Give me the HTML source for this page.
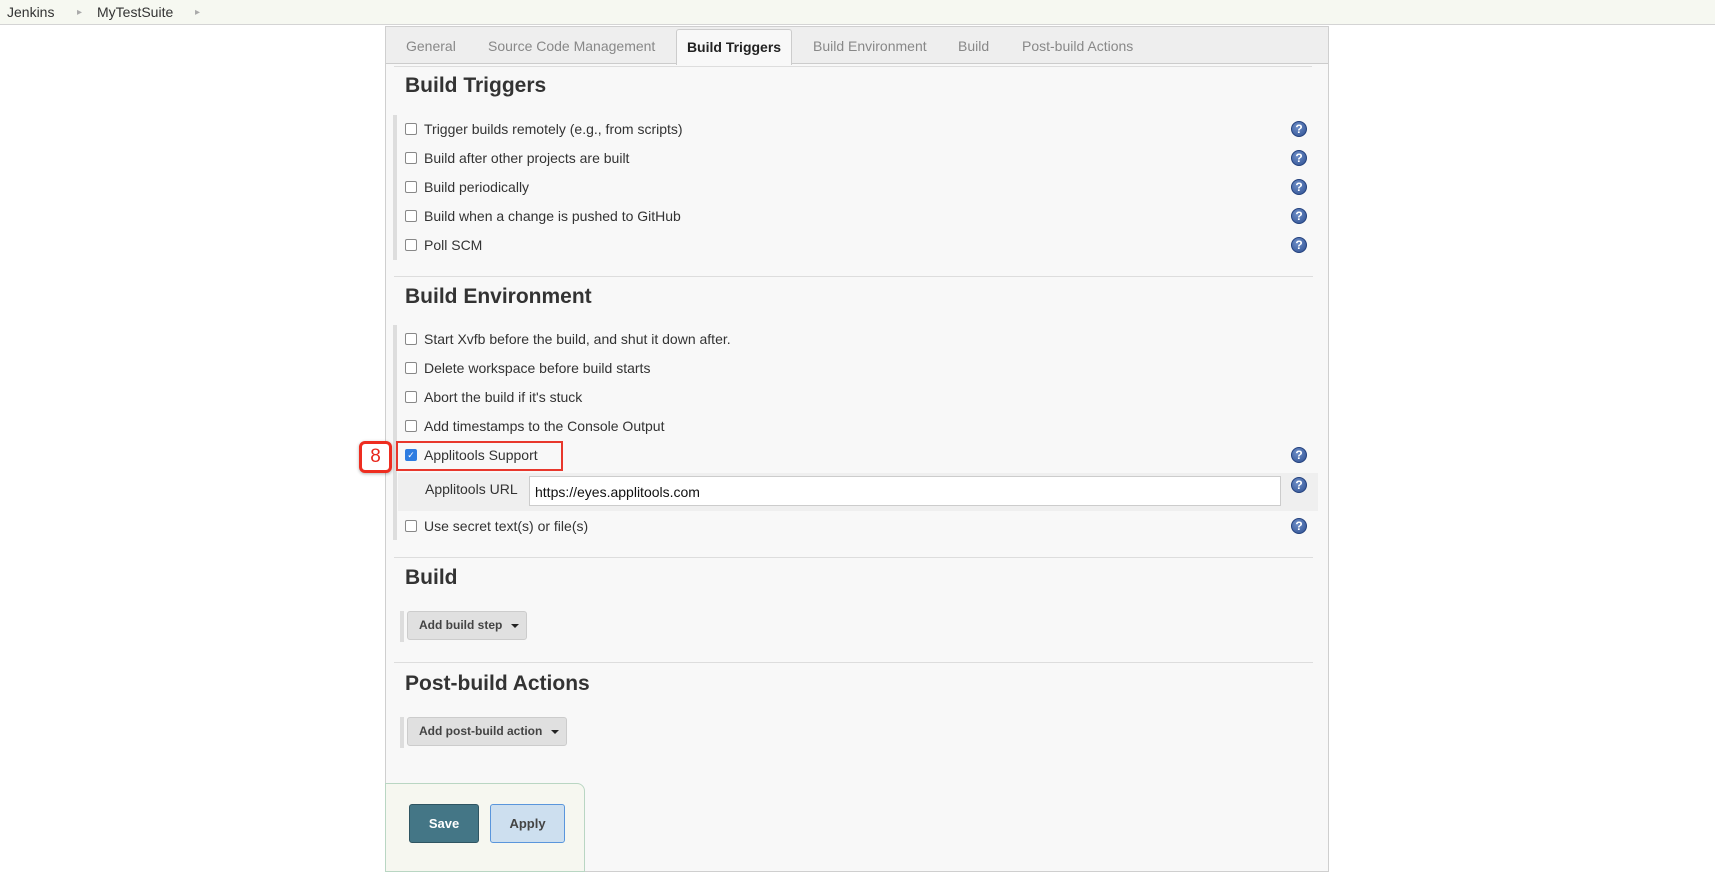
<!DOCTYPE html>
<html><head><style>
*{box-sizing:border-box}
body{margin:0;width:1715px;height:892px;background:#fff;font-family:"Liberation Sans",Arial,sans-serif;color:#333;position:relative;overflow:hidden}
.a{position:absolute}
.hdr{left:0;top:0;width:1715px;height:25px;background:#f6f8f1;border-bottom:1px solid #d4d4d4}
.hdr span{position:absolute;top:4px;font-size:14px;color:#333}
.panel{left:385px;top:26px;width:944px;height:846px;background:#f8f8f8;border:1px solid #cfcfcf}
.tabbar{left:386px;top:27px;width:942px;height:37px;background:#eee;border-bottom:1px solid #ccc}
.tab{top:38px;font-size:14px;color:#888}
.tabsel{left:676px;top:29px;width:116px;height:36px;background:#f8f8f8;border:1px solid #ccc;border-bottom:none;border-radius:3px 3px 0 0;font-size:14px;font-weight:bold;color:#222;text-align:center;line-height:34px}
h2{position:absolute;margin:0;font-size:21px;font-weight:bold;color:#333}
.bar{background:#ddd;width:4px}
.sep{height:1px;background:#ddd;left:394px;width:919px}
.row{font-size:14px;color:#333;left:405px}
.cb{position:absolute;left:0;top:2px;width:12px;height:12px;border:1px solid #888;border-radius:2px;background:#fff}
.row .t{position:absolute;left:19px;top:0;white-space:nowrap}
.help{width:16px;height:16px;border-radius:50%;background:radial-gradient(circle at 40% 35%,#6f8fc8,#2d4f91);border:1px solid #24427e;color:#fff;font-size:12px;font-weight:bold;text-align:center;line-height:15px;left:1291px}
.btn{background:#e0e0e0;border:1px solid #ccc;border-radius:3px;font-size:12px;font-weight:bold;color:#444;padding-left:11px;line-height:27px;white-space:nowrap}
.btn i{display:inline-block;width:0;height:0;border-left:4px solid transparent;border-right:4px solid transparent;border-top:4px solid #222;margin-left:9px;vertical-align:middle}
</style></head><body>
<div class="a hdr"><span style="left:7px">Jenkins</span><span style="left:77px;color:#aaa;font-size:10px;top:7px">&#9656;</span><span style="left:97px">MyTestSuite</span><span style="left:195px;color:#aaa;font-size:10px;top:7px">&#9656;</span></div>
<div class="a panel"></div>
<div class="a tabbar"></div>
<div class="a tab" style="left:406px">General</div>
<div class="a tab" style="left:488px">Source Code Management</div>
<div class="a tabsel">Build Triggers</div>
<div class="a tab" style="left:813px">Build Environment</div>
<div class="a tab" style="left:958px">Build</div>
<div class="a tab" style="left:1022px">Post-build Actions</div>
<div class="a sep" style="top:66px;width:918px"></div>

<h2 style="left:405px;top:74px">Build Triggers</h2>
<div class="a bar" style="left:393px;top:115px;height:145px"></div>
<div class="a row" style="top:121px"><div class="cb"></div><span class="t">Trigger builds remotely (e.g., from scripts)</span></div>
<div class="a row" style="top:150px"><div class="cb"></div><span class="t">Build after other projects are built</span></div>
<div class="a row" style="top:179px"><div class="cb"></div><span class="t">Build periodically</span></div>
<div class="a row" style="top:208px"><div class="cb"></div><span class="t">Build when a change is pushed to GitHub</span></div>
<div class="a row" style="top:237px"><div class="cb"></div><span class="t">Poll SCM</span></div>
<div class="a help" style="top:121px">?</div>
<div class="a help" style="top:150px">?</div>
<div class="a help" style="top:179px">?</div>
<div class="a help" style="top:208px">?</div>
<div class="a help" style="top:237px">?</div>
<div class="a sep" style="top:276px"></div>

<h2 style="left:405px;top:285px">Build Environment</h2>
<div class="a bar" style="left:393px;top:325px;height:215px"></div>
<div class="a row" style="top:331px"><div class="cb"></div><span class="t">Start Xvfb before the build, and shut it down after.</span></div>
<div class="a row" style="top:360px"><div class="cb"></div><span class="t">Delete workspace before build starts</span></div>
<div class="a row" style="top:389px"><div class="cb"></div><span class="t">Abort the build if it's stuck</span></div>
<div class="a row" style="top:418px"><div class="cb"></div><span class="t">Add timestamps to the Console Output</span></div>
<div class="a row" style="top:447px"><div class="cb" style="background:#2f7de1;border-color:#2f7de1;color:#fff;font-size:9px;line-height:10px;text-align:center">&#10003;</div><span class="t">Applitools Support</span></div>
<div class="a" style="left:396px;top:441px;width:167px;height:30px;border:2px solid #e8372c"></div>
<div class="a" style="left:359px;top:441px;width:33px;height:32px;border:3px solid #ee2d20;border-radius:6px;background:#fff;color:#e8261b;font-size:19px;text-align:center;line-height:26px;box-shadow:0 1px 3px rgba(0,0,0,.3)">8</div>
<div class="a" style="left:398px;top:473px;width:920px;height:38px;background:#efefef"></div>
<div class="a" style="left:425px;top:481px;font-size:14px">Applitools URL</div>
<div class="a" style="left:529px;top:476px;width:752px;height:30px;background:#fff;border:1px solid #ccc;font-size:14px;padding:7px 5px;color:#111">https://eyes.applitools.com</div>
<div class="a row" style="top:518px"><div class="cb"></div><span class="t">Use secret text(s) or file(s)</span></div>
<div class="a help" style="top:447px">?</div>
<div class="a help" style="top:477px">?</div>
<div class="a help" style="top:518px">?</div>
<div class="a sep" style="top:557px"></div>

<h2 style="left:405px;top:566px">Build</h2>
<div class="a bar" style="left:400px;top:611px;height:31px"></div>
<div class="a btn" style="left:407px;top:611px;width:120px;height:29px">Add build step<i></i></div>
<div class="a sep" style="top:662px"></div>
<h2 style="left:405px;top:672px">Post-build Actions</h2>
<div class="a bar" style="left:400px;top:717px;height:31px"></div>
<div class="a btn" style="left:407px;top:717px;width:160px;height:29px">Add post-build action<i></i></div>

<div class="a" style="left:385px;top:783px;width:200px;height:89px;background:#f6f7f0;border:1px solid #b9d6c3;border-radius:0 8px 0 0"></div>
<div class="a" style="left:409px;top:804px;width:70px;height:39px;background:#447686;border:1px solid #2f5562;border-radius:3px;color:#fff;font-weight:bold;font-size:13px;text-align:center;line-height:37px">Save</div>
<div class="a" style="left:490px;top:804px;width:75px;height:39px;background:#cddfef;border:1px solid #5a96dc;border-radius:3px;color:#444;font-weight:bold;font-size:13px;text-align:center;line-height:37px">Apply</div>
</body></html>
